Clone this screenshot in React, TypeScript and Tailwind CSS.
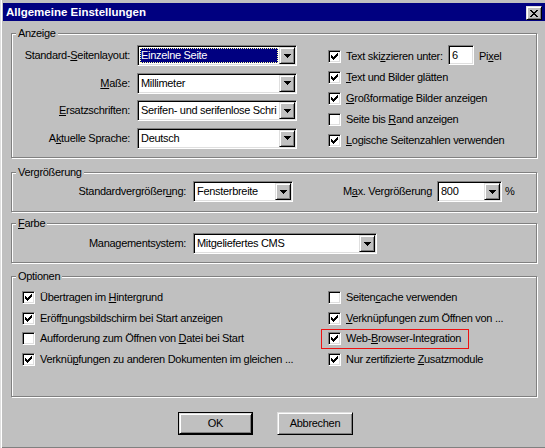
import React from "react";

// classic 3D bevels
const sunken =
  "border border-t-[#808080] border-l-[#808080] border-r-white border-b-white shadow-[inset_1px_1px_0_#000,inset_-1px_-1px_0_#dfdfdf]";
const raised =
  "border border-t-[#dfdfdf] border-l-[#dfdfdf] border-r-black border-b-black shadow-[inset_1px_1px_0_#fff,inset_-1px_-1px_0_#808080]";

const CheckMark = () => (
  <svg width="7" height="7" viewBox="0 0 7 7" shapeRendering="crispEdges">
    <path
      d="M6 0h1v1h-1z M5 1h2v1h-2z M0 2h1v1h-1z M4 2h3v1h-3z M0 3h2v1h-2z M3 3h3v1h-3z M0 4h5v1h-5z M1 5h3v1h-3z M2 6h1v1h-1z"
      fill="#000"
    />
  </svg>
);

const Arrow = () => (
  <svg width="7" height="4" viewBox="0 0 7 4" shapeRendering="crispEdges">
    <path d="M0 0h7v1h-7z M1 1h5v1h-5z M2 2h3v1h-3z M3 3h1v1h-1z" fill="#000" />
  </svg>
);

const Checkbox: React.FC<{ checked?: boolean }> = ({ checked }) => (
  <span className={`${sunken} w-[13px] h-[13px] shrink-0 bg-white flex items-center justify-center`}>
    {checked && <CheckMark />}
  </span>
);

const Combo: React.FC<{ value: string; width: string; selected?: boolean }> = ({
  value,
  width,
  selected,
}) => (
  <div className={`${sunken} ${width} h-[21px] bg-white flex p-[1px] shrink-0`}>
    <div className="flex-1 min-w-0 flex p-[1px] overflow-hidden">
      {selected ? (
        <span className="flex-1 flex items-center pl-[1px] bg-[#000080] text-white outline-1 outline-dotted outline-[#ffffa0] -outline-offset-1 whitespace-nowrap">
          {value}
        </span>
      ) : (
        <span className="flex-1 flex items-center pl-[1px] whitespace-nowrap overflow-hidden">
          {value}
        </span>
      )}
    </div>
    <div className={`${raised} w-[16px] h-full bg-[#c0c0c0] flex items-center justify-center shrink-0`}>
      <Arrow />
    </div>
  </div>
);

const Group: React.FC<{ title: React.ReactNode; className: string; children: React.ReactNode }> = ({
  title,
  className,
  children,
}) => (
  <fieldset
    className={`border border-[#808080] shadow-[inset_1px_1px_0_#fff,1px_1px_0_#fff] ${className}`}
  >
    <legend className="ml-[4px] px-[2px] leading-[13px] bg-[#c0c0c0]">{title}</legend>
    {children}
  </fieldset>
);

const CheckRow: React.FC<{ checked?: boolean; children: React.ReactNode; className?: string }> = ({
  checked,
  children,
  className = "",
}) => (
  <div className={`flex items-center gap-[5px] whitespace-nowrap ${className}`}>
    <Checkbox checked={checked} />
    <span>{children}</span>
  </div>
);

const anzeigeLabels: { label: React.ReactNode; value: string; selected?: boolean }[] = [
  { label: <>Standard-<u>S</u>eitenlayout:</>, value: "Einzelne Seite", selected: true },
  { label: <><u>M</u>aße:</>, value: "Millimeter" },
  { label: <><u>E</u>rsatzschriften:</>, value: "Serifen- und serifenlose Schri" },
  { label: <>A<u>k</u>tuelle Sprache:</>, value: "Deutsch" },
];

export default function App() {
  return (
    <div className="w-[545px] h-[448px] bg-[#c0c0c0] pl-[3px] pt-[3px] overflow-hidden font-['Liberation_Sans',Arial,sans-serif] text-[11px] leading-[13px] tracking-[-0.3px] text-black shadow-[inset_1px_0_0_#dfdfdf,inset_2px_0_0_#fff,inset_0_-1px_0_#808080]">
      {/* title bar */}
      <div className="h-[18px] bg-[#000080] flex items-center justify-between pl-[3px] pr-[3px]">
        <span className="text-white font-bold text-[11.5px] tracking-normal">Allgemeine Einstellungen</span>
        <div className={`${raised} w-[16px] h-[14px] bg-[#c0c0c0] flex items-center justify-center mt-[2px]`}>
          <svg width="8" height="7" viewBox="0 0 8 7" shapeRendering="crispEdges">
            <path
              d="M0 0h2v1h-2z M6 0h2v1h-2z M1 1h2v1h-2z M5 1h2v1h-2z M2 2h4v1h-4z M3 3h2v1h-2z M2 4h4v1h-4z M1 5h2v1h-2z M5 5h2v1h-2z M0 6h2v1h-2z M6 6h2v1h-2z"
              fill="#000"
            />
          </svg>
        </div>
      </div>

      <div className="pl-[8px] pr-[8px]">
        {/* Anzeige */}
        <Group title="Anzeige" className="mt-[6px]">
          <div className="flex pt-[5px] pb-[6px]">
            <div className="flex flex-col gap-[6.5px]">
              {anzeigeLabels.map((row, i) => (
                <div key={i} className="flex items-center h-[21px]">
                  <span className="w-[118px] text-right whitespace-nowrap">{row.label}</span>
                  <div className="ml-[7px]">
                    <Combo value={row.value} width="w-[160px]" selected={row.selected} />
                  </div>
                </div>
              ))}
            </div>
            <div className="ml-[31px] mt-[1px] flex flex-col">
              <div className="flex items-center h-[21px] whitespace-nowrap">
                <Checkbox checked />
                <span className="ml-[5px] w-[102px]">Text ski<u>z</u>zieren unter:</span>
                <div className={`${sunken} w-[26px] h-[20px] bg-white flex items-center pl-[3px] -mt-[3px]`}>6</div>
                <span className="ml-[5px]">Pi<u>x</u>el</span>
              </div>
              <CheckRow checked className="h-[21px]"><u>T</u>ext und Bilder glätten</CheckRow>
              <CheckRow checked className="h-[21px]"><u>G</u>roßformatige Bilder anzeigen</CheckRow>
              <CheckRow className="h-[21px]">Seite bis <u>R</u>and anzeigen</CheckRow>
              <CheckRow checked className="h-[21px]"><u>L</u>ogische Seitenzahlen verwenden</CheckRow>
            </div>
          </div>
        </Group>

        {/* Vergrößerung */}
        <Group title="Vergrößerung" className="mt-[8px]">
          <div className="flex items-center pt-[2px] pb-[9px]">
            <span className="w-[174px] text-right whitespace-nowrap">
              Standardvergrößer<u>u</u>ng:
            </span>
            <div className="ml-[7px]">
              <Combo value="Fensterbreite" width="w-[100px]" />
            </div>
            <span className="w-[139px] text-right whitespace-nowrap">
              M<u>a</u>x. Vergrößerung
            </span>
            <div className="ml-[5px]">
              <Combo value="800" width="w-[65px]" />
            </div>
            <span className="ml-[3px]">%</span>
          </div>
        </Group>

        {/* Farbe */}
        <Group title={<><u>F</u>arbe</>} className="mt-[5px]">
          <div className="flex items-center pt-[3px] pb-[8px]">
            <span className="w-[174px] text-right whitespace-nowrap">Managementsystem:</span>
            <div className="ml-[7px]">
              <Combo value="Mitgeliefertes CMS" width="w-[184px]" />
            </div>
          </div>
        </Group>

        {/* Optionen */}
        <Group title="Optionen" className="mt-[7px]">
          <div className="flex pt-[4.5px] pb-[26.5px] pl-[10px]">
            <div className="w-[306px] flex flex-col">
              <CheckRow checked className="h-[20.5px]">Übertragen im <u>H</u>intergrund</CheckRow>
              <CheckRow checked className="h-[20.5px]">Eröff<u>n</u>ungsbildschirm bei Start anzeigen</CheckRow>
              <CheckRow className="h-[20.5px]">Aufforderung zum Öffnen von <u>D</u>atei bei Start</CheckRow>
              <CheckRow checked className="h-[20.5px]">Verknü<u>p</u>fungen zu anderen Dokumenten im gleichen ...</CheckRow>
            </div>
            <div className="flex flex-col">
              <CheckRow className="h-[20.5px]">Seiten<u>c</u>ache verwenden</CheckRow>
              <CheckRow checked className="h-[20.5px]"><u>V</u>erknüpfungen zum Öffnen von ...</CheckRow>
              <CheckRow
                checked
                className="h-[20.5px] w-[148px] -ml-[7px] pl-[6px] border border-[#ee1111]"
              >
                Web-<u>B</u>rowser-Integration
              </CheckRow>
              <CheckRow checked className="h-[20.5px]">Nur zertifizierte <u>Z</u>usatzmodule</CheckRow>
            </div>
          </div>
        </Group>

        {/* buttons */}
        <div className="flex mt-[15px] pl-[167px] gap-[24px]">
          <div className="border border-black w-[75px] h-[23px]">
            <button className={`${raised} w-full h-full bg-[#c0c0c0] flex items-center justify-center`}>
              OK
            </button>
          </div>
          <button className={`${raised} w-[76px] h-[23px] bg-[#c0c0c0] flex items-center justify-center`}>
            Abbrechen
          </button>
        </div>
      </div>
    </div>
  );
}
